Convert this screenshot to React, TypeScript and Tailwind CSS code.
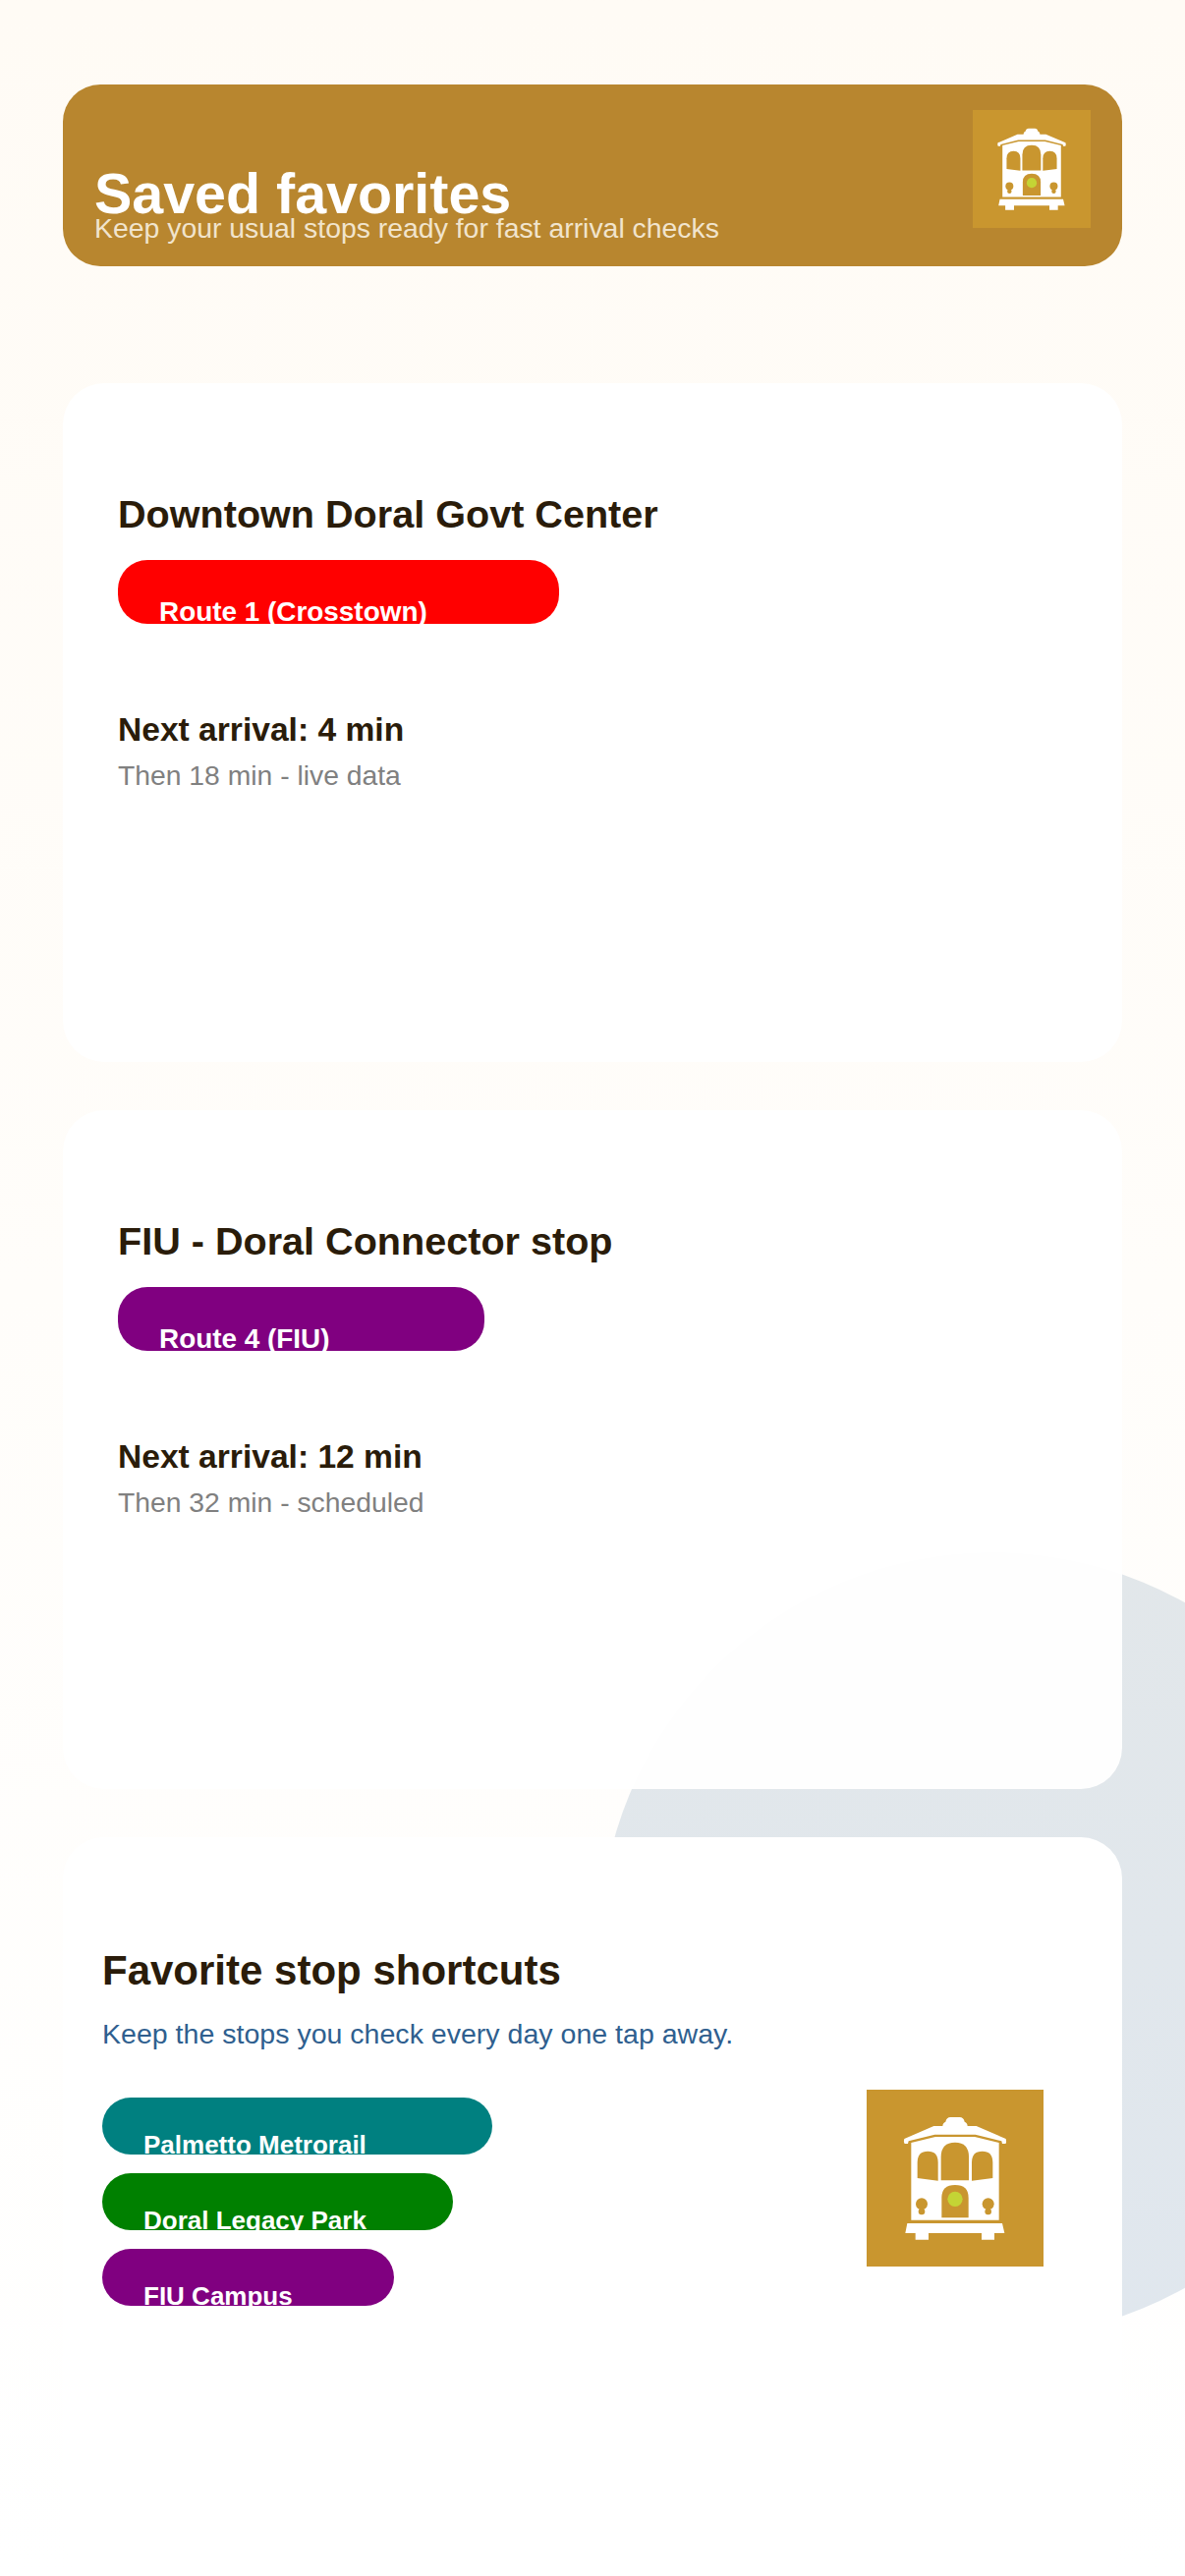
const Trolley = ({ className }: { className: string }) => (
  <svg viewBox="0 0 540 540" className={className}>
    <path d="M232 112 Q232 101 241 98 Q244 84 256 84 L284 84 Q296 84 299 98 Q308 101 308 112 Z" fill="#fff" />
    <path d="M115 150 L205 111 L335 111 L425 150 Q428 162 424 165 L414 165 L412 157 L332 137 L208 137 L128 157 L126 165 L116 165 Q112 160 115 150 Z" fill="#fff" />
    <path d="M136 162 L210 144 L330 144 L404 162 L404 398 L136 398 Z" fill="#fff" />
    <path d="M155 270 L155 222 Q155 188 187 188 Q218 188 218 222 L218 278 Z" fill="#c9962f" />
    <path d="M227 277 L227 205 Q227 161 270 161 Q312 161 312 205 L312 277 Z" fill="#c9962f" />
    <path d="M321 278 L321 222 Q321 188 353 188 Q385 188 385 222 L385 270 Z" fill="#c9962f" />
    <path d="M229 391 L229 330 Q229 291 270 291 Q311 291 311 330 L311 391 Z" fill="#c9962f" />
    <circle cx="270" cy="334" r="23" fill="#c4d435" />
    <circle cx="168" cy="349" r="18" fill="#c9962f" />
    <circle cx="168" cy="372" r="10" fill="#c9962f" />
    <circle cx="371" cy="349" r="18" fill="#c9962f" />
    <circle cx="371" cy="372" r="10" fill="#c9962f" />
    <path d="M124 408 L414 408 L421 438 L390 438 L390 458 L351 458 L351 438 L189 438 L189 458 L149 458 L149 438 L118 438 Z" fill="#fff" />
  </svg>
);

const StopCard = ({ name, route, color, pillWidth, next, then }: { name: string; route: string; color: string; pillWidth: string; next: string; then: string }) => (
  <div className="h-[690.5px] rounded-[42px] bg-white/95 pl-[56px] pt-[111px]">
    <h2 className="text-[39.6px] leading-[44px] font-bold text-[#2a1c0a]">{name}</h2>
    <div className={`mt-[25px] h-[65px] overflow-hidden rounded-[30px] pl-[42px] pt-[35px] ${color} ${pillWidth}`}>
      <span className="block text-[27.9px] leading-[36px] font-bold text-white">{route}</span>
    </div>
    <p className="mt-[88px] text-[33.6px] leading-[40px] font-bold text-[#2a1c0a]">{next}</p>
    <p className="mt-[8px] text-[28.3px] leading-[36px] text-[#808080]">{then}</p>
  </div>
);

const Shortcut = ({ label, color, width }: { label: string; color: string; width: string }) => (
  <div className={`h-[58px] overflow-hidden rounded-[29px] pl-[42px] pt-[31px] ${color} ${width}`}>
    <span className="block text-[26px] leading-[34px] font-bold text-white">{label}</span>
  </div>
);

export default function App() {
  return (
    <div className="relative h-[2622px] overflow-hidden bg-gradient-to-b from-[#fffbf5] to-white font-['Liberation_Sans',Arial,sans-serif]">
      <div className="absolute left-[610px] top-[1580px] h-[800px] w-[800px] rounded-full bg-gradient-to-b from-[#e2e7ea] to-[#e0e7ee]" />
      <div className="relative flex flex-col gap-[49.5px] px-[64px] pt-[86px]">
        <header className="mb-[69.5px] flex h-[185px] items-start justify-between rounded-[38px] bg-[#b8862f] pl-[32px] pr-[32px] pt-[26px]">
          <div className="pt-[56px]">
            <h1 className="text-[57.4px] leading-[58px] font-bold text-white">Saved favorites</h1>
            <p className="-mt-[11px] text-[28.4px] leading-[34px] text-[#f1e4cd]">Keep your usual stops ready for fast arrival checks</p>
          </div>
          <div className="flex h-[120px] w-[120px] items-center justify-center bg-[#c9962f]">
            <Trolley className="h-[120px] w-[120px]" />
          </div>
        </header>

        <StopCard name="Downtown Doral Govt Center" route="Route 1 (Crosstown)" color="bg-[#ff0000]" pillWidth="w-[449px]" next="Next arrival: 4 min" then="Then 18 min - live data" />
        <StopCard name="FIU - Doral Connector stop" route="Route 4 (FIU)" color="bg-[#800080]" pillWidth="w-[373px]" next="Next arrival: 12 min" then="Then 32 min - scheduled" />

        <section className="h-[752px] rounded-[42px] bg-white pl-[40px] pr-[80px] pt-[114px]">
          <h2 className="text-[42px] leading-[44px] font-bold text-[#2a1c0a]">Favorite stop shortcuts</h2>
          <p className="mt-[24px] text-[28.55px] leading-[36px] text-[#2f5f8f]">Keep the stops you check every day one tap away.</p>
          <div className="mt-[39px] flex items-start justify-between">
            <div className="mt-[8px] flex flex-col gap-[19px]">
              <Shortcut label="Palmetto Metrorail" color="bg-[#008080]" width="w-[397px]" />
              <Shortcut label="Doral Legacy Park" color="bg-[#008000]" width="w-[357px]" />
              <Shortcut label="FIU Campus" color="bg-[#800080]" width="w-[297px]" />
            </div>
            <Trolley className="h-[180px] w-[180px] bg-[#c9962f]" />
          </div>
        </section>
      </div>
    </div>
  );
}
